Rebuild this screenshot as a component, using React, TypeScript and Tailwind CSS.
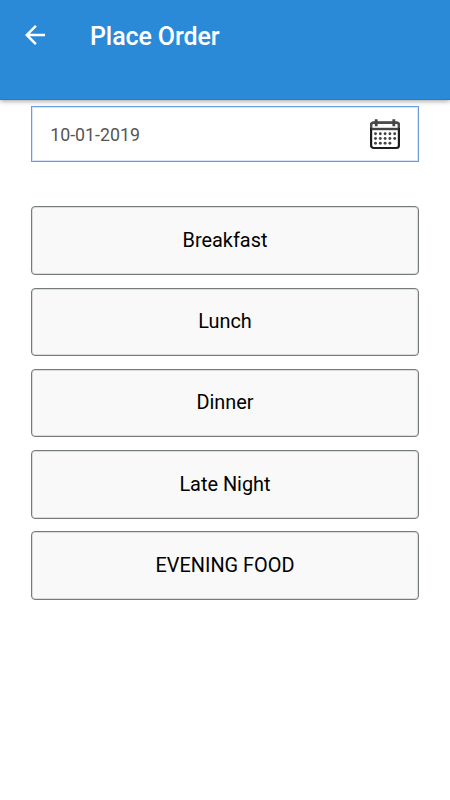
const meals = ['Breakfast', 'Lunch', 'Dinner', 'Late Night', 'EVENING FOOD'];

function BackArrow() {
  return (
    <svg className="size-[30px]" viewBox="0 0 24 24" fill="#fff" aria-hidden="true">
      <path d="M20 11H7.83l5.59-5.59L12 4l-8 8 8 8 1.41-1.41L7.83 13H20v-2z" />
    </svg>
  );
}

function CalendarIcon() {
  const rows = [
    { y: 14.8, xs: [5.5, 10.3, 15.1, 19.9, 24.7] },
    { y: 19.5, xs: [5.5, 10.3, 15.1, 19.9, 24.7] },
    { y: 24.2, xs: [5.5, 10.3, 15.1, 19.9] },
  ];
  return (
    <svg className="h-[31px] w-[30px]" viewBox="0 0 30 31" fill="none" aria-hidden="true">
      <rect x="1.100" y="3.700" width="27.800" height="25.300" rx="2.500" stroke="#1c1c1c" strokeWidth="2.200" />
      <path d="M1.100 9V6Q1.100 3.700 3.500 3.700H26.500Q28.900 3.700 28.900 6V9" stroke="#4c4c4c" strokeWidth="2.200" />
      <path d="M1.500 10H28.500" stroke="#444" strokeWidth="2.400" />
      <path d="M6.200 0.300V7.300M23.800 0.300V7.300" stroke="#444" strokeWidth="2.800" />
      {rows.map((row) =>
        row.xs.map((x) => (
          <circle key={`${x}-${row.y}`} cx={x} cy={row.y} r="1.45" fill="#444" />
        )),
      )}
    </svg>
  );
}

export default function App() {
  return (
    <div className="flex h-[800px] w-full flex-col bg-white font-['Roboto',sans-serif]">
      <header className="flex h-[100px] shrink-0 items-start border-b border-[#1681d4] bg-[#2b8ad8] px-5 pt-5 shadow-[0_1px_5px_rgba(0,0,0,0.4)]">
        <button aria-label="Back" className="size-[30px]">
          <BackArrow />
        </button>
        <h1 className="ml-10 pt-px text-[25px] leading-[32px] font-medium tracking-[-0.1px] text-white">Place Order</h1>
      </header>
      <main className="flex flex-col px-[31.250px] pt-[6px]">
        <div className="flex h-[56px] items-center justify-between border border-[#6c9ce0] bg-white pr-[17.500px] pl-[18px] shadow-[inset_0_0_0_1px_#d8e5f8]">
          <span className="pt-[2px] text-[17.750px] text-[#555]">10-01-2019</span>
          <CalendarIcon />
        </div>
        <div className="mt-[44.250px] flex flex-col gap-[12.750px]">
          {meals.map((meal) => (
            <button
              key={meal}
              className="flex h-[68.500px] items-center justify-center rounded-[4px] border border-[#757a7a] bg-[#f9f9f9] pt-[0.500px] text-[19.900px] text-black shadow-[inset_0_0_0_1px_#dcdcdc]"
            >
              {meal}
            </button>
          ))}
        </div>
      </main>
    </div>
  );
}
